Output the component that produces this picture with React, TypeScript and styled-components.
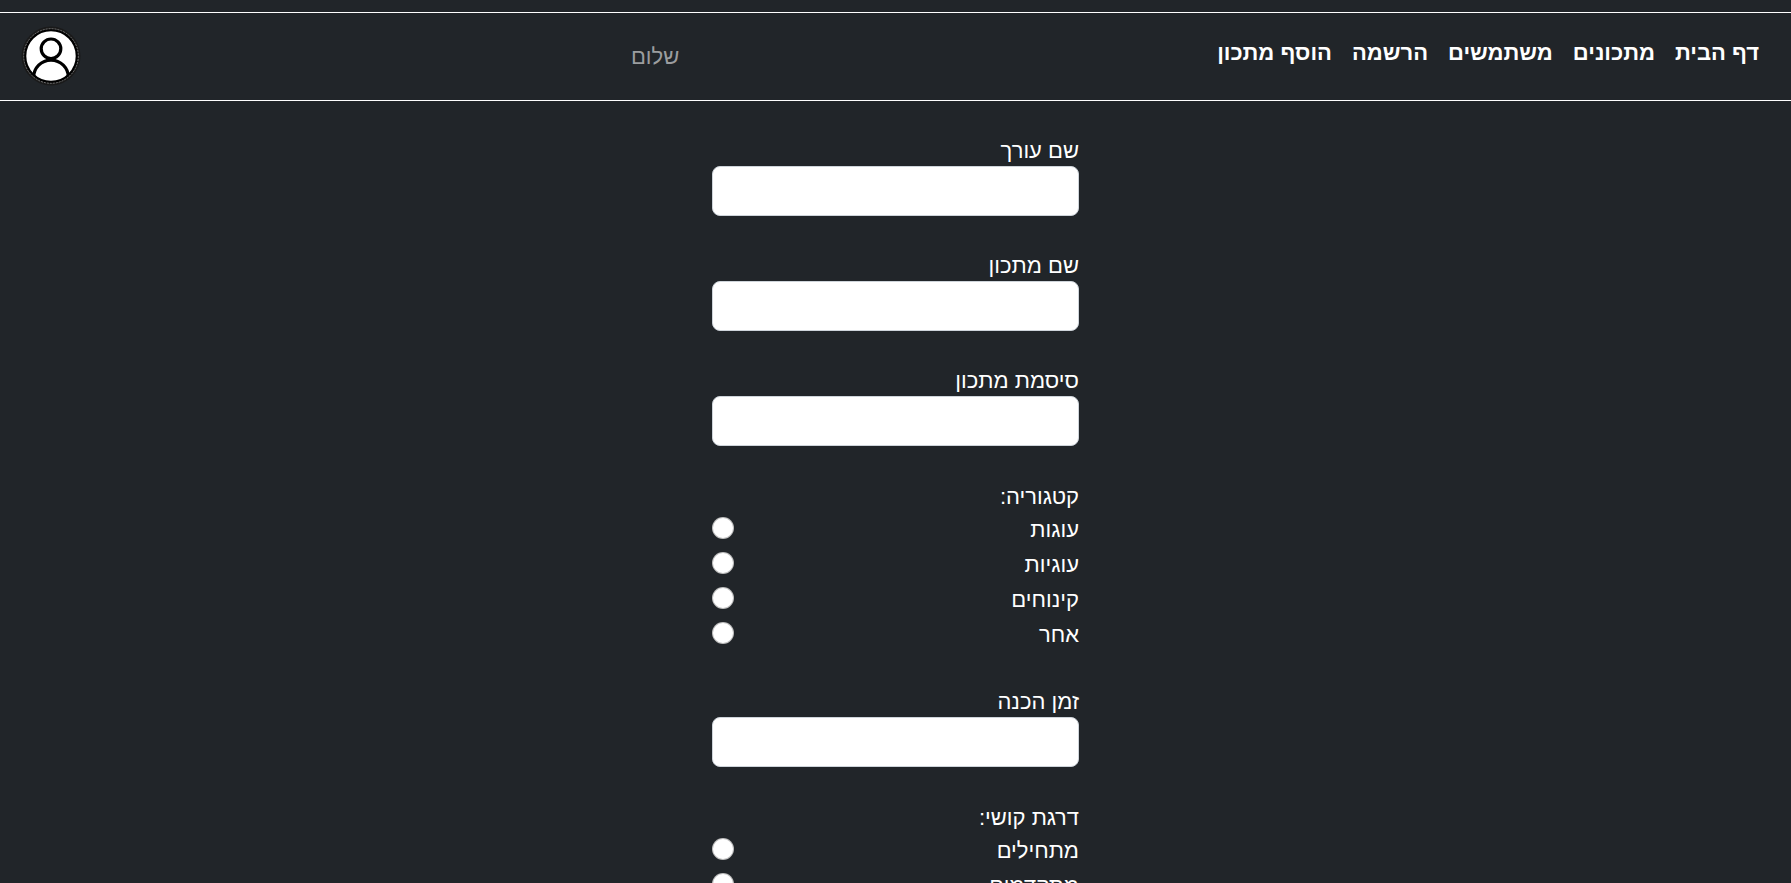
import React from "react";
import styled, { createGlobalStyle } from "styled-components";

const GlobalStyle = createGlobalStyle`
  *, *::before, *::after { box-sizing: border-box; }
  html { scrollbar-width: none; }
  body {
    margin: 0;
    background: #212529;
    color: #fff;
    font-family: "Liberation Sans", Arial, sans-serif;
    font-size: 22px;
    line-height: 33px;
  }
`;

const Page = styled.div`
  padding: 12px 0 32px;
`;

const Header = styled.header`
  display: flex;
  align-items: center;
  justify-content: space-between;
  padding: 13px 32px 14px 21px;
  border: solid #fff;
  border-width: 1px 0;
`;

const Nav = styled.nav`
  display: flex;
  gap: 20px;
  padding-bottom: 8px;
`;

const NavLink = styled.a`
  color: #fff;
  font-weight: 700;
  text-decoration: none;
  white-space: nowrap;
`;

const Greeting = styled.span`
  color: #9b9d9f;
`;

const AvatarButton = styled.button`
  display: flex;
  margin: 0;
  margin-inline-start: 12px;
  padding: 0;
  border: 0;
  border-radius: 50%;
  background: none;
  cursor: pointer;
`;

const Form = styled.form`
  display: flex;
  flex-direction: column;
  gap: 32px;
  width: 100%;
  max-width: 367px;
  margin: 32px auto 0;
`;

const Field = styled.div`
  display: flex;
  flex-direction: column;
`;

const FieldLabel = styled.label`
  padding-top: 3px;
  line-height: 30px;
`;

const TextInput = styled.input`
  width: 100%;
  height: 50px;
  padding: 6px 12px;
  border: 1px solid #ced4da;
  border-radius: 8px;
  background: #fff;
  color: #212529;
  font: inherit;
`;

const Group = styled.fieldset`
  min-width: 0;
  margin: 0;
  padding: 0;
  border: 0;
`;

const Legend = styled.legend`
  padding: 4px 0 0;
  line-height: 30px;
`;

const Option = styled.div`
  display: flex;
  align-items: flex-start;
  justify-content: space-between;
  line-height: 35px;
`;

const Radio = styled.input`
  appearance: none;
  width: 22px;
  height: 22px;
  margin: 5px 0 0;
  border: 1px solid rgba(0, 0, 0, 0.25);
  border-radius: 50%;
  background: #fff;

  &:checked {
    border: 6px solid #0d6efd;
  }
`;

const links = ["דף הבית", "מתכונים", "משתמשים", "הרשמה", "הוסף מתכון"];

function TextField({ id, label, type = "text" }: { id: string; label: string; type?: string }) {
  return (
    <Field>
      <FieldLabel htmlFor={id}>{label}</FieldLabel>
      <TextInput id={id} name={id} type={type} />
    </Field>
  );
}

function RadioGroup({ name, title, options }: { name: string; title: string; options: string[] }) {
  return (
    <Group>
      <Legend>{title}</Legend>
      {options.map((option, i) => (
        <Option key={option}>
          <label htmlFor={`${name}-${i}`}>{option}</label>
          <Radio id={`${name}-${i}`} type="radio" name={name} value={option} />
        </Option>
      ))}
    </Group>
  );
}

function AvatarIcon() {
  return (
    <svg width="60" height="60" viewBox="0 0 60 60" aria-hidden="true">
      <clipPath id="avatar-disc">
        <circle cx="30" cy="30" r="26" />
      </clipPath>
      <circle cx="30" cy="30" r="29.5" fill="#1a1a1a" />
      <circle cx="30" cy="30" r="26" fill="#fff" />
      <g clipPath="url(#avatar-disc)" fill="none" stroke="#000" strokeWidth="3.2">
        <circle cx="30" cy="51.5" r="17.4" />
        <circle cx="30" cy="22.8" r="9.8" fill="#fff" />
      </g>
      <circle cx="30" cy="30" r="25.9" fill="none" stroke="#000" strokeWidth="2.4" />
      <circle cx="30" cy="30" r="27.3" fill="none" stroke="#9a9a9a" strokeWidth="0.7" strokeDasharray="2 1" />
    </svg>
  );
}

export default function App() {
  return (
    <Page dir="rtl" lang="he">
      <GlobalStyle />
      <Header>
        <Nav>
          {links.map((text) => (
            <NavLink key={text} href="#">{text}</NavLink>
          ))}
        </Nav>
        <Greeting>שלום</Greeting>
        <AvatarButton type="button" aria-label="שלום">
          <AvatarIcon />
        </AvatarButton>
      </Header>
      <Form>
        <TextField id="editor" label="שם עורך" />
        <TextField id="recipe" label="שם מתכון" />
        <TextField id="password" label="סיסמת מתכון" type="password" />
        <RadioGroup name="category" title="קטגוריה:" options={["עוגות", "עוגיות", "קינוחים", "אחר"]} />
        <TextField id="time" label="זמן הכנה" />
        <RadioGroup name="level" title="דרגת קושי:" options={["מתחילים", "מתקדמים"]} />
      </Form>
    </Page>
  );
}
